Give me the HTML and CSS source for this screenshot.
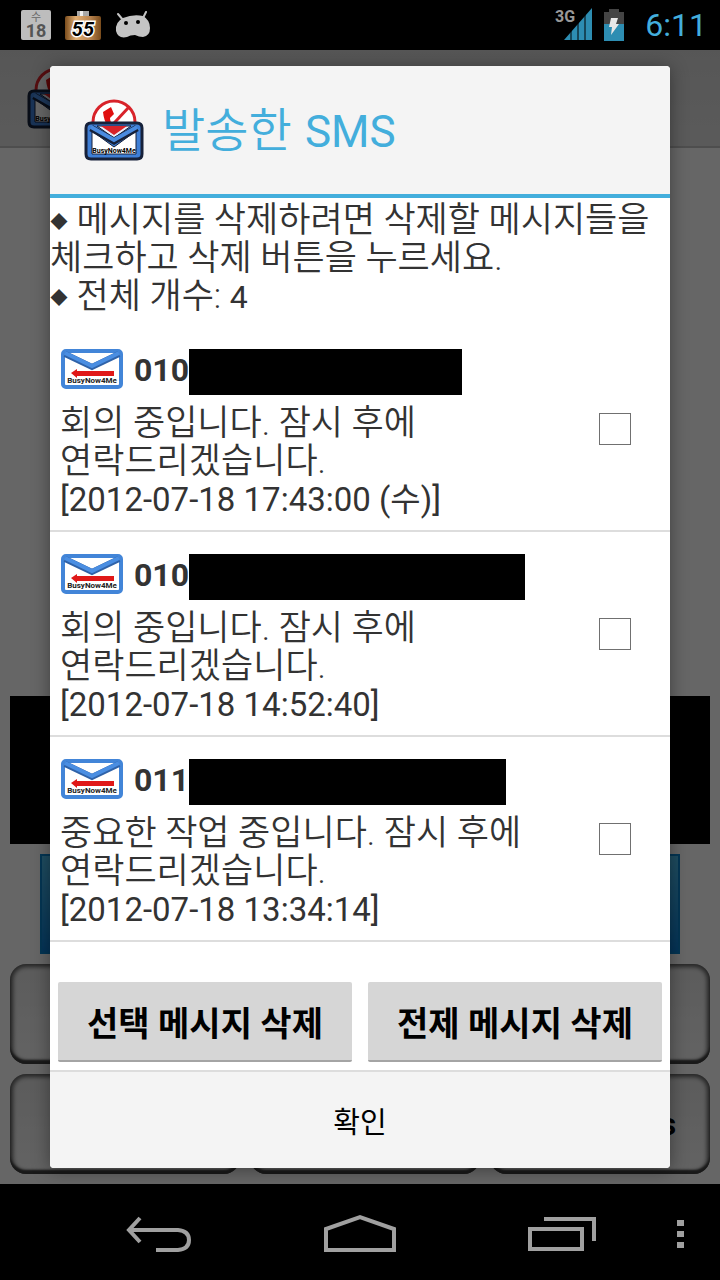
FILE: index.html
```html
<!DOCTYPE html>
<html lang="ko">
<head>
    <meta charset="UTF-8">
    <meta name="viewport" content="width=device-width, initial-scale=1.0">
    <title>발송한 SMS</title>
    <link rel="stylesheet" href="styles.css">
</head>
<body>
    <svg class="defs" aria-hidden="true">
        <defs>
            <linearGradient id="cell" x1="0" x2="1" y1="0" y2="0">
                <stop offset="0" stop-color="#7a4c1c"/>
                <stop offset="0.3" stop-color="#e0ad72"/>
                <stop offset="0.7" stop-color="#b88450"/>
                <stop offset="1" stop-color="#7a4c1c"/>
            </linearGradient>
            <!-- app logo: blocked call behind an envelope -->
            <symbol id="logo" viewBox="0 0 64 64">
                <circle cx="32" cy="24" r="21" fill="#fff" stroke="#d8232a" stroke-width="3"/>
                <path d="M21 14l8-5 3 7-4 4c0 4 3 8 7 11l5-2 3 5-6 5c-9-4-15-14-16-25z" fill="#e01010"/>
                <path d="M47 9L20 38" stroke="#d8232a" stroke-width="3"/>
                <path d="M9 25h46q5 0 5 5v26q0 5-5 5H9q-5 0-5-5V30q0-5 5-5z" fill="#3f7fd6" stroke="#16213a" stroke-width="3"/>
                <path d="M10 33l22 16 22-16v23H10z" fill="#fff" stroke="#16213a" stroke-width="1"/>
                <path d="M15 28h34L32 40z" fill="#e9eefa" stroke="#16213a" stroke-width="1"/>
                <path d="M19 28h26l-13 9z" fill="#d8232a"/>
                <path d="M9 30l23 13 23-13" fill="none" stroke="#16213a" stroke-width="7"/>
                <path d="M9 29l23 13 23-13" fill="none" stroke="#4a8be0" stroke-width="4"/>
                <text x="32" y="55" class="logo-text">BusyNow4Me</text>
            </symbol>
            <!-- sent message -->
            <symbol id="sent" viewBox="0 0 62 40">
                <rect x="2" y="2" width="58" height="36" rx="3" fill="#fff" stroke="#4285d8" stroke-width="4"/>
                <path d="M4 5l27 13L58 5" fill="none" stroke="#2f62a8" stroke-width="6"/>
                <path d="M4 4l27 13L58 4" fill="none" stroke="#4a8ee2" stroke-width="4"/>
                <path d="M10 24l6-4v2h37v5H16v2z" fill="#e01818"/>
                <text x="31" y="34" class="sent-text">BusyNow4Me</text>
            </symbol>
        </defs>
    </svg>

    <header class="status-bar">
        <svg width="30" height="30" viewBox="0 0 30 30">
            <rect width="30" height="30" rx="2" fill="#bdbdbd"/>
            <text x="15" y="11" class="cal-day">수</text>
            <text x="15" y="27" class="cal-date">18</text>
        </svg>
        <svg width="36" height="30" viewBox="0 0 36 30">
            <path d="M12 1h12v5H12z" fill="#a8a8a8"/>
            <path d="M15 1h3v5h-3z" fill="#eee"/>
            <rect y="6" width="36" height="24" rx="2" fill="url(#cell)"/>
            <text x="18" y="26" class="cell-text">55</text>
        </svg>
        <svg width="36" height="28" viewBox="0 0 36 28">
            <path d="M3 3l5 6M31 1l-3 6" stroke="#c4c4c4" stroke-width="2" stroke-linecap="round"/>
            <path d="M8 7q10-4 20-2 7 4 7 12 0 8-7 9-4 0-8-2-5 0-8 2-9 2-11-6Q0 11 8 7z" fill="#c4c4c4"/>
            <circle cx="11" cy="12" r="2" fill="#000"/>
            <circle cx="23" cy="11" r="2" fill="#000"/>
        </svg>
        <div class="status-right">
            <svg width="38" height="34" viewBox="0 0 38 34">
                <text x="0" y="14" class="net-text">3G</text>
                <path d="M37 0v32H9z" fill="#2d8db2"/>
                <path d="M16 20v12M23 14v18M30 7v25" stroke="#000" stroke-width="1"/>
            </svg>
            <svg width="20" height="32" viewBox="0 0 20 32">
                <path d="M5 0h10v3h5v12H0V3h5z" fill="#444"/>
                <path d="M0 15h20v17H0z" fill="#2d8db2"/>
                <path d="M7 9h7l-2 6h3L7 26l1-8H5z" fill="#e8e8e8"/>
            </svg>
            <span class="clock">6:11</span>
        </div>
    </header>

    <main class="screen">
        <div class="app">
            <div class="action-bar">
                <svg width="64" height="64"><use href="#logo"/></svg>
            </div>
            <div class="ad"></div>
            <button class="blue-btn" aria-label="시작"></button>
            <div class="app-grid">
                <button></button>
                <button></button>
                <button></button>
                <button></button>
                <button></button>
                <button>More apps</button>
            </div>
        </div>

        <div class="scrim">
            <section class="dialog" role="dialog" aria-labelledby="title">
                <div class="dialog-header">
                    <svg width="64" height="64"><use href="#logo"/></svg>
                    <h1 id="title">발송한 <span>SMS</span></h1>
                </div>
                <p class="info">
                    <span class="mark">◆</span> 메시지를 삭제하려면 삭제할 메시지들을 체크하고 삭제 버튼을 누르세요.<br>
                    <span class="mark">◆</span> 전체 개수: <span class="num">4</span>
                </p>
                <ul class="list">
                    <li>
                        <label class="message" for="msg1">
                            <span class="sender"><svg width="62" height="40"><use href="#sent"/></svg><b>010</b><i class="bar bar-short"></i></span>
                            <span class="text">회의 중입니다. 잠시 후에 연락드리겠습니다.</span>
                            <span class="date">[2012-07-18 17:43:00 (수)]</span>
                        </label>
                        <input type="checkbox" id="msg1">
                    </li>
                    <li>
                        <label class="message" for="msg2">
                            <span class="sender"><svg width="62" height="40"><use href="#sent"/></svg><b>010</b><i class="bar bar-long"></i></span>
                            <span class="text">회의 중입니다. 잠시 후에 연락드리겠습니다.</span>
                            <span class="date">[2012-07-18 14:52:40]</span>
                        </label>
                        <input type="checkbox" id="msg2">
                    </li>
                    <li>
                        <label class="message" for="msg3">
                            <span class="sender"><svg width="62" height="40"><use href="#sent"/></svg><b>011</b><i class="bar bar-mid"></i></span>
                            <span class="text">중요한 작업 중입니다. 잠시 후에 연락드리겠습니다.</span>
                            <span class="date">[2012-07-18 13:34:14]</span>
                        </label>
                        <input type="checkbox" id="msg3">
                    </li>
                </ul>
                <div class="actions">
                    <button>선택 메시지 삭제</button>
                    <button>전제 메시지 삭제</button>
                </div>
                <button class="ok">확인</button>
            </section>
        </div>
    </main>

    <nav class="nav-bar">
        <div class="nav-main">
            <button aria-label="뒤로">
                <svg width="68" height="36" viewBox="0 0 68 36">
                    <path d="M16 2L5 14l11 12M5 14h49q11 1 11 10t-11 10H32" fill="none" stroke="#a0a0a0" stroke-width="4"/>
                </svg>
            </button>
            <button aria-label="홈">
                <svg width="72" height="40" viewBox="0 0 72 40">
                    <path d="M2 36V15L36 3l34 12v21z" fill="none" stroke="#a0a0a0" stroke-width="4"/>
                </svg>
            </button>
            <button aria-label="최근 앱">
                <svg width="68" height="36" viewBox="0 0 68 36">
                    <path d="M2 13h52v20H2zM16 3h50v22" fill="none" stroke="#a0a0a0" stroke-width="4"/>
                </svg>
            </button>
        </div>
        <button aria-label="메뉴">
            <svg width="8" height="30" viewBox="0 0 8 30">
                <path d="M0 1h7v6H0zM0 12h7v6H0zM0 23h7v6H0z" fill="#a0a0a0"/>
            </svg>
        </button>
    </nav>
</body>
</html>
```
FILE: styles.css
```css
:root {
    --blue: #43aedc;
    --text: #333333;
    --line: #dddddd;
}
* {
    box-sizing: border-box;
}
body {
    margin: 0;
    min-height: 100vh;
    display: flex;
    flex-direction: column;
    background: #000000;
    color: var(--text);
    font-family: Roboto, "Noto Sans CJK KR", sans-serif;
    word-break: keep-all;
}
svg {
    display: block;
    flex-shrink: 0;
}
button {
    font-family: inherit;
    border: none;
    cursor: pointer;
}
.defs {
    position: absolute;
    width: 0;
    height: 0;
}

/* Status bar */
.status-bar {
    display: flex;
    align-items: center;
    gap: 14px;
    height: 50px;
    padding: 0 13px 0 21px;
}
.status-right {
    display: flex;
    align-items: center;
    gap: 11px;
    margin-left: auto;
}
.clock {
    margin-left: 10px;
    font-size: 32px;
    color: var(--blue);
}
.cal-day, .cal-date, .cell-text, .logo-text, .sent-text {
    text-anchor: middle;
}
.cal-day {
    font-size: 11px;
    fill: #666666;
}
.cal-date {
    font-size: 18px;
    font-weight: bold;
    fill: #555555;
}
.cell-text {
    font-size: 20px;
    font-weight: bold;
    font-style: italic;
    fill: #000000;
    stroke: #ffffff;
    stroke-width: 3px;
    paint-order: stroke;
}
.net-text {
    font-size: 16px;
    font-weight: bold;
    fill: #999999;
}
.logo-text {
    font-size: 7px;
    font-weight: bold;
    fill: #000000;
}
.sent-text {
    font-size: 8px;
    font-weight: bold;
    fill: #222222;
}

/* App behind the dialog */
.screen {
    position: relative;
    flex: 1;
    display: flex;
}
.app {
    flex: 1;
    display: flex;
    flex-direction: column;
    padding-bottom: 10px;
    background: #ffffff;
}
.action-bar {
    display: flex;
    align-items: center;
    height: 98px;
    padding: 0 25px;
    background: linear-gradient(#d8d8d8, #e2e2e2);
    border-bottom: 2px solid #c4c4c4;
}
.ad {
    height: 148px;
    margin: auto 10px 10px;
    background: #000000;
}
.blue-btn {
    height: 100px;
    margin: 0 40px 10px;
    background: linear-gradient(#50c0f0, #0a80d8);
    border: 2px solid #0c86d0;
}
.app-grid {
    display: grid;
    grid-template-columns: 23fr 23fr 22fr;
    grid-auto-rows: 100px;
    gap: 10px;
    margin: 0 10px;
}
.app-grid button {
    padding: 0;
    border-radius: 16px;
    background: linear-gradient(#e4e4e4, #f8f8f8);
    box-shadow: inset 0 -4px 2px #404040, inset 0 0 4px 3px #606060;
    font-size: 32px;
    font-weight: bold;
    color: #000000;
}

/* Dialog */
.scrim {
    position: absolute;
    inset: 0;
    display: flex;
    align-items: center;
    padding: 0 50px;
    background: rgba(0, 0, 0, 0.6);
}
.dialog {
    width: 100%;
    background: #ffffff;
    border-radius: 4px;
    box-shadow: 0 2px 18px rgba(0, 0, 0, 0.4);
    overflow: hidden;
}
.dialog-header {
    display: flex;
    align-items: center;
    gap: 16px;
    height: 132px;
    padding: 0 32px;
    background: #f4f4f4;
    border-bottom: 4px solid var(--blue);
}
.dialog-header h1 {
    margin: 0;
    padding-bottom: 2px;
    font-family: "Noto Sans CJK KR", sans-serif;
    font-size: 47px;
    font-weight: 350;
    line-height: 60px;
    color: var(--blue);
}
.dialog-header h1 span {
    font-family: Roboto, sans-serif;
    font-size: 44px;
    font-weight: 400;
}
.info {
    margin: 0;
    padding: 4px 0 11px;
    font-size: 35px;
    font-weight: 350;
    line-height: 38px;
}
.mark {
    font-family: "DejaVu Sans", sans-serif;
    font-size: 18px;
    line-height: 18px;
    vertical-align: 4px;
}
.num {
    font-size: 32px;
    font-weight: 400;
    line-height: 32px;
}
.list {
    margin: 0;
    padding: 0;
    list-style: none;
}
.list li {
    display: flex;
    align-items: center;
    justify-content: space-between;
    padding: 0 39px 0 10px;
    border-bottom: 2px solid var(--line);
}
.message {
    width: 470px;
    padding: 22px 0 11px;
}
.sender {
    display: flex;
    align-items: center;
    height: 46px;
    margin-bottom: 10px;
    font-size: 32px;
}
.sender svg {
    margin: 0 11px 6px 1px;
}
.sender b {
    margin-bottom: 4px;
}
.bar {
    height: 46px;
    background: #000000;
}
.bar-short {
    width: 273px;
}
.bar-mid {
    width: 317px;
}
.bar-long {
    width: 336px;
}
.text {
    display: block;
    font-size: 35px;
    font-weight: 350;
    line-height: 38px;
}
.date {
    display: block;
    font-size: 33px;
    line-height: 38px;
}
.list input {
    appearance: none;
    width: 32px;
    height: 32px;
    margin: 0;
    border: 1px solid #707070;
    background: #ffffff;
}
.list input:checked {
    background: var(--blue);
}
.actions {
    display: flex;
    gap: 16px;
    padding: 40px 8px 8px;
}
.actions button {
    flex: 1;
    height: 80px;
    padding: 0;
    border-radius: 2px;
    background: #d6d6d6;
    border-bottom: 2px solid #a4a4a4;
    font-size: 34px;
    font-weight: bold;
    color: #000000;
}
.ok {
    display: block;
    width: 100%;
    height: 98px;
    background: #f4f4f4;
    border-top: 2px solid var(--line);
    font-size: 29px;
    color: #000000;
}

/* Navigation bar */
.nav-bar {
    display: flex;
    align-items: center;
    justify-content: space-between;
    height: 96px;
    padding: 4px 35px 0 124px;
}
.nav-main {
    display: flex;
    align-items: center;
    gap: 132px;
}
.nav-bar button {
    padding: 0;
    background: none;
}
```
